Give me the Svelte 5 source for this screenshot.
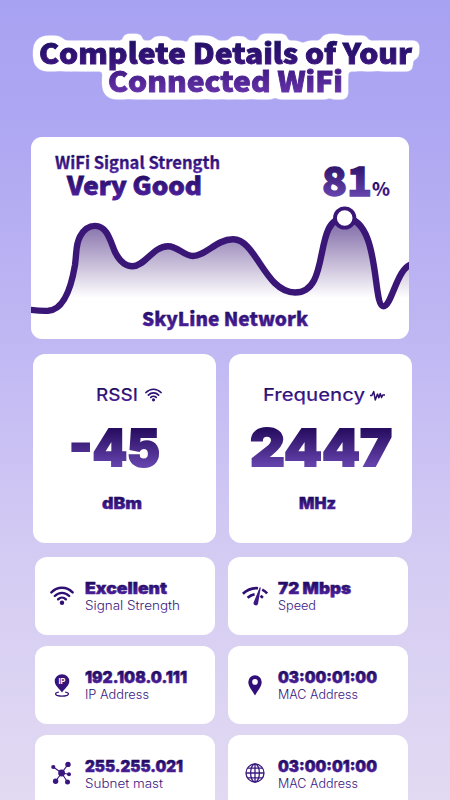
<script>
	const wide = 'Inter, "Open Sans", sans-serif';
	const human = '"Noto Sans CJK SC", "Noto Sans", sans-serif';

	const titleLines = [
		{ text: 'Complete Details of Your', x: 39, y: 64, width: 373 },
		{ text: 'Connected WiFi', x: 108, y: 92, width: 235 }
	];

	const metrics = [
		{ name: 'RSSI', nameWidth: 42, icon: 'wifi', value: '-45', valueWidth: 91, unit: 'dBm', unitWidth: 40, shift: -10.5 },
		{ name: 'Frequency', nameWidth: 102, icon: 'pulse', value: '2447', valueWidth: 142, unit: 'MHz', unitWidth: 37, shift: 0 }
	];

	const details = [
		{ icon: 'wifi', value: 'Excellent', valueWidth: 82, label: 'Signal Strength', labelWidth: 95 },
		{ icon: 'speed', value: '72 Mbps', valueWidth: 73, label: 'Speed', labelWidth: 38 },
		{ icon: 'ip', value: '192.108.0.111', valueWidth: 102, label: 'IP Address', labelWidth: 64 },
		{ icon: 'pin', value: '03:00:01:00', valueWidth: 99, label: 'MAC Address', labelWidth: 80 },
		{ icon: 'nodes', value: '255.255.021', valueWidth: 98, label: 'Subnet mast', labelWidth: 78 },
		{ icon: 'globe', value: '03:00:01:00', valueWidth: 99, label: 'MAC Address', labelWidth: 80 }
	];

	const wave =
		'M-4 172.3 C4 173.5 11 174 17 173.8 C31 173 39.5 155 44 128 C46 113 44.5 108 49 99.5 C53 92 58 88.9 64 88.9 C76 88.9 79 103 84 115 C88.5 124 94 129.3 101.5 129.3 C114 129.3 122 109.2 137 109.2 C147 109.2 153 119 161.5 119 C175 119 185 102.5 202 102.3 C225 102 234 155.5 264 155.5 C301 155.5 281 81 313.5 81 C350 81 341 169.3 352.5 169.3 C361 169.3 366 129 382 127';
</script>

{#snippet words(text, width, cap, size, weight, family, fill = 'ink', stroke = 0)}
	<svg class="words" {width} height={cap}>
		<text
			y={cap}
			textLength={width}
			lengthAdjust="spacingAndGlyphs"
			font-family={family}
			font-size={size}
			font-weight={weight}
			stroke="url(#{fill})"
			stroke-width={stroke}
			fill="url(#{fill})">{text}</text>
	</svg>
{/snippet}

{#snippet wifi(width)}
	<svg {width} height={width * 0.8} viewBox="0 0 24 19" fill="none" stroke="#2f0f73" stroke-width="2.4" stroke-linecap="round">
		<path d="M1.4 6.3 C7.4 .1 16.6 .1 22.6 6.3" />
		<path d="M4.8 9.9 C8.9 5.7 15.1 5.7 19.2 9.9" />
		<path d="M8.1 13.2 C10.3 11 13.7 11 15.9 13.2" />
		<circle cx="12" cy="16.6" r="2.2" fill="#2f0f73" stroke="none" />
	</svg>
{/snippet}

<svg width="0" height="0" class="defs">
	<defs>
		<linearGradient id="ink" x1="0" y1="0.2" x2="0" y2="0.85">
			<stop offset="0" stop-color="#210b62" />
			<stop offset="1" stop-color="#4d1f9b" />
		</linearGradient>
		<linearGradient id="big" x1="0" y1="0.2" x2="0" y2="0.8">
			<stop offset="0" stop-color="#270d60" />
			<stop offset="1" stop-color="#6543ac" />
		</linearGradient>
		<linearGradient id="title" gradientUnits="userSpaceOnUse" x1="0" y1="40" x2="0" y2="96">
			<stop offset="0" stop-color="#1f1065" />
			<stop offset="0.4" stop-color="#38147a" />
			<stop offset="1" stop-color="#6835ad" />
		</linearGradient>
		<linearGradient id="shade" gradientUnits="userSpaceOnUse" x1="0" y1="80" x2="0" y2="161">
			<stop offset="0" stop-color="#3a1777" stop-opacity="0.68" />
			<stop offset="1" stop-color="#3a1777" stop-opacity="0" />
		</linearGradient>
		<!-- rounded white sticker edge behind the title -->
		<filter id="sticker" filterUnits="userSpaceOnUse" x="0" y="0" width="450" height="137" color-interpolation-filters="sRGB">
			<feMorphology in="SourceAlpha" operator="dilate" radius="4" />
			<feGaussianBlur stdDeviation="2.6" />
			<feColorMatrix values="0 0 0 0 1  0 0 0 0 1  0 0 0 0 1  0 0 0 11 -0.7" result="edge" />
			<feMerge>
				<feMergeNode in="edge" />
				<feMergeNode in="SourceGraphic" />
			</feMerge>
		</filter>
	</defs>
</svg>

<main>
	<h1>
		<svg width="450" height="137">
			<g filter="url(#sticker)" fill="url(#title)" stroke="url(#title)" stroke-width="0.9" font-family={human}>
				{#each titleLines as line}
					<text x={line.x} y={line.y} textLength={line.width} lengthAdjust="spacingAndGlyphs">{line.text}</text>
				{/each}
			</g>
		</svg>
	</h1>

	<section class="hero">
		<svg class="chart" width="378" height="202">
			<path d="{wave} V202 H-4 Z" fill="url(#shade)" />
			<path d={wave} fill="none" stroke="#3a1777" stroke-width="6.4" />
			<circle cx="313.7" cy="81" r="9.7" fill="#fff" stroke="#3a1777" stroke-width="3.8" />
		</svg>
		<div class="hero-text">
			<div class="summary">
				<div class="quality">
					{@render words('WiFi Signal Strength', 165, 12, 16.6, 600, human, 'ink', 0.3)}
					{@render words('Very Good', 135, 18, 25, 900, human, 'ink', 0.8)}
				</div>
				<div class="percent">
					{@render words('81', 50, 29, 39.5, 900, human, 'big', 1.3)}
					{@render words('%', 18, 13, 18, 900, human)}
				</div>
			</div>
			{@render words('SkyLine Network', 166, 14, 19, 900, human, 'ink', 0.4)}
		</div>
	</section>

	<section class="metrics">
		{#each metrics as m}
			<div class="card metric">
				<div class="metric-name">
					{@render words(m.name, m.nameWidth, 13, 17.6, 500, wide)}
					{#if m.icon === 'wifi'}
						{@render wifi(17)}
					{:else}
						<svg class="pulse" width="15" height="13" viewBox="0 0 16 13" fill="none" stroke="#2b0e6b" stroke-width="1.6" stroke-linejoin="round">
							<path d="M0 6.5 H2 L4 2.3 L5.6 11.2 L8 5 L9.4 9 L11 4.5 L12.3 8.6 L13.6 6 H16" />
						</svg>
					{/if}
				</div>
				<div style="margin-left: {m.shift * 2}px">
					{@render words(m.value, m.valueWidth, 37, 51, 900, wide, 'big', 1.8)}
				</div>
				<div class="unit">
					{@render words(m.unit, m.unitWidth, 11.5, 15.6, 900, wide, 'ink', 0.4)}
				</div>
			</div>
		{/each}
	</section>

	<section class="details">
		{#each details as d}
			<div class="card detail">
				<div class="icon">
					{#if d.icon === 'wifi'}
						{@render wifi(24)}
					{:else if d.icon === 'speed'}
						<svg width="26" height="20" viewBox="0 0 26 20" fill="none" stroke="#2f0f73" stroke-width="2.6">
							<path d="M.9 7.7 Q7.5 1.6 16 2.2" />
							<path d="M20.2 3.6 Q23 5 25.2 7.5" />
							<path d="M5.6 11.8 Q8.8 8.9 12.6 8.2" />
							<path d="M18.5 9.7 L20.9 11.8" />
							<path d="M17.8 1.2 L18.8 1.5 L16 17.7 A2.2 2.2 0 1 1 11.6 16.5 Z" fill="#3d1784" stroke="none" />
						</svg>
					{:else if d.icon === 'ip'}
						<svg width="16" height="23" viewBox="0 0 16 23">
							<path d="M8 18.5 C5.5 14.6 .7 11.8 .7 7.3 A7.3 7.1 0 0 1 15.3 7.3 C15.3 11.8 10.5 14.6 8 18.5 Z" fill="#36137b" />
							<text x="8" y="10.3" text-anchor="middle" font-family={wide} font-size="7.5" font-weight="700" fill="#fff">IP</text>
							<path d="M4.8 18.1 C-.5 18.8 .8 22.1 8 22.1 C15.2 22.1 16.5 18.8 11.2 18.1" fill="none" stroke="#36137b" stroke-width="1.2" />
						</svg>
					{:else if d.icon === 'pin'}
						<svg width="14" height="21" viewBox="0 0 14 21">
							<path d="M7 20.5 C4.8 16.4 .3 11.5 .3 7 A6.7 6.7 0 0 1 13.7 7 C13.7 11.5 9.2 16.4 7 20.5 Z M7 4.1 A2.8 2.8 0 1 0 7 9.7 A2.8 2.8 0 1 0 7 4.1 Z" fill="#320f78" fill-rule="evenodd" />
						</svg>
					{:else if d.icon === 'nodes'}
						<svg class="nodes" width="21" height="24" viewBox="0 0 21 24" fill="#3a1580">
							<path d="M2.3 6 L10.6 12 L17 3.4 M4.6 20.3 L10.6 12 L16.5 21 M10.6 12 L18 13.2" fill="none" stroke="#3a1580" stroke-width="1.1" />
							<circle cx="10.6" cy="12" r="3.4" />
							<circle cx="2.3" cy="6" r="2.1" />
							<circle cx="17" cy="3.4" r="2.7" />
							<circle cx="18" cy="13.2" r="2" />
							<circle cx="4.6" cy="20.3" r="2.7" />
							<circle cx="16.5" cy="21" r="2.5" />
						</svg>
					{:else}
						<svg class="globe" width="20" height="20" viewBox="0 0 20 20" fill="none" stroke="#3a1a80" stroke-width="1.3">
							<circle cx="10" cy="10" r="9" />
							<ellipse cx="10" cy="10" rx="4.4" ry="9" />
							<path d="M1 10 H19 M10 1 V19 M2.7 5.2 H17.3 M2.7 14.8 H17.3" />
						</svg>
					{/if}
				</div>
				<div class="detail-text">
					{@render words(d.value, d.valueWidth, 11.5, 15.8, 900, wide, 'ink', 0.5)}
					{@render words(d.label, d.labelWidth, 9, 12.4, 300, wide)}
				</div>
			</div>
		{/each}
	</section>
</main>

<style>
	:global(body) {
		margin: 0;
		overflow: hidden;
	}
	main {
		box-sizing: border-box;
		width: 450px;
		height: 800px;
		overflow: hidden;
		background: linear-gradient(#a8a2f2 0, #ada6f2 14%, #c0b8f3 43%, #d4cbf3 69%, #e2daf2 100%);
	}
	svg {
		display: block;
		flex: none;
	}
	.defs {
		position: absolute;
	}
	.words {
		overflow: visible;
	}
	h1 {
		margin: 0;
		height: 137px;
		font-size: 28px;
		font-weight: 900;
	}
	.hero {
		display: grid;
		width: 378px;
		height: 202px;
		margin-left: 31px;
		border-radius: 11px;
		background: #fff;
		overflow: hidden;
	}
	.chart,
	.hero-text {
		grid-area: 1 / 1;
	}
	.hero-text {
		display: flex;
		flex-direction: column;
		justify-content: space-between;
		padding: 20px 18px 13px 24px;
	}
	.hero-text > :global(.words) {
		margin-left: 87px;
	}
	.summary {
		display: flex;
		justify-content: space-between;
	}
	.quality {
		display: grid;
		gap: 7px;
	}
	.quality > :global(.words + .words) {
		margin-left: 12px;
	}
	.percent {
		display: flex;
		align-items: flex-end;
		padding: 10px 1px 0 0;
	}
	.card {
		box-sizing: border-box;
		background: #fff;
		border-radius: 12px;
	}
	.metrics {
		display: grid;
		grid-template-columns: 183px 183px;
		gap: 13px;
		margin: 15px 0 0 33px;
	}
	.metric {
		display: flex;
		flex-direction: column;
		align-items: center;
		height: 188.5px;
		padding-top: 34px;
	}
	.metric-name {
		display: flex;
		gap: 7px;
		margin: 0 0 27px 9px;
	}
	.pulse {
		margin: 1px 3px 0 -2px;
	}
	.unit {
		margin: 31px 5.5px 0 0;
	}
	.details {
		display: grid;
		grid-template-columns: 180px 180px;
		grid-auto-rows: 78px;
		gap: 11px 13px;
		margin: 14.5px 0 0 35px;
	}
	.detail {
		display: flex;
		padding-left: 13px;
	}
	.icon {
		display: grid;
		place-items: center;
		width: 27px;
		height: 78px;
	}
	.nodes,
	.globe {
		margin-bottom: 3px;
	}
	.detail-text {
		display: flex;
		flex-direction: column;
		gap: 7px;
		padding: 25px 0 0 9.5px;
	}
</style>
